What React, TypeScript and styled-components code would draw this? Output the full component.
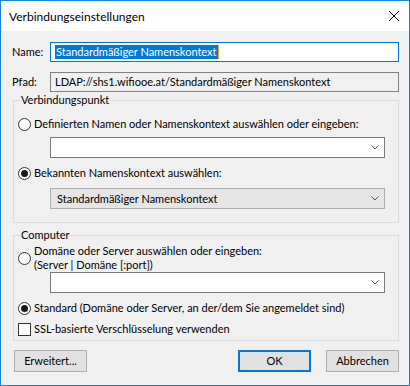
import React from "react"
import styled, { createGlobalStyle } from "styled-components"

const GlobalStyle = createGlobalStyle`
    html, body {
        margin: 0;
        padding: 0;
        background: #ffffff;
    }
`

const Window = styled.div`
    width: 410px;
    height: 386px;
    box-sizing: border-box;
    border: 1px solid #1883d7;
    display: flex;
    flex-direction: column;
    font-family: Lato, "Liberation Sans", sans-serif;
    font-size: 11px;
    color: #000;
`

const TitleBar = styled.div`
    height: 30px;
    background: #ffffff;
    display: flex;
    align-items: center;
    justify-content: space-between;
    padding: 0 10px 0 8px;
`

const Title = styled.span`
    font-size: 12px;
    line-height: 14px;
    margin-top: 1px;
`

const CloseIcon = styled.svg`
    width: 10px;
    height: 10px;
`

const Body = styled.div`
    flex: 1;
    background: #f0f0f0;
    padding: 11px 10px 0 11px;
    display: flex;
    flex-direction: column;
`

const FieldRow = styled.div<{ $gap?: number }>`
    display: flex;
    align-items: center;
    margin-top: ${({ $gap }) => $gap ?? 0}px;
`

const Label = styled.span`
    width: 38px;
    line-height: 14px;
`

const TextBox = styled.div<{ $border: string; $bg: string }>`
    flex: 1;
    height: 20px;
    box-sizing: border-box;
    border: 1px solid ${({ $border }) => $border};
    background: ${({ $bg }) => $bg};
    display: flex;
    align-items: center;
    padding-left: 4px;
    line-height: 14px;
`

const Selected = styled.span`
    background: #0078d7;
    color: #ffffff;
    padding: 0 1px;
    border-right: 1px solid #f0a030;
`

const Group = styled.fieldset<{ $top: number }>`
    margin: ${({ $top }) => $top}px 0 0 1px;
    padding: 0 0 0 4px;
    border: 1px solid #dcdcdc;
    min-width: 0;
`

const Legend = styled.legend`
    padding: 0 1px;
    margin-left: 2px;
    line-height: 14px;
`

const GroupInner = styled.div<{ $top: number; $bottom: number }>`
    display: flex;
    flex-direction: column;
    padding: ${({ $top }) => $top}px 0 ${({ $bottom }) => $bottom}px 0;
`

const OptionRow = styled.div<{ $gap?: number }>`
    display: flex;
    align-items: center;
    gap: 3px;
    margin-top: ${({ $gap }) => $gap ?? 0}px;
    line-height: 14px;
`

const RadioCircle = styled.span<{ $checked?: boolean }>`
    width: 13px;
    height: 13px;
    box-sizing: border-box;
    border-radius: 50%;
    border: 1px solid #333333;
    background: #ffffff;
    display: flex;
    align-items: center;
    justify-content: center;
    flex-shrink: 0;

    &::after {
        content: "";
        display: ${({ $checked }) => ($checked ? "block" : "none")};
        width: 7px;
        height: 7px;
        border-radius: 50%;
        background: #1a1a1a;
    }
`

const CheckSquare = styled.span`
    width: 13px;
    height: 13px;
    box-sizing: border-box;
    border: 1px solid #333333;
    background: #ffffff;
    flex-shrink: 0;
`

const TwoLines = styled.span`
    line-height: 14px;
`

const Combo = styled.div<{ $list?: boolean; $gap?: number }>`
    height: 21px;
    box-sizing: border-box;
    margin: ${({ $gap }) => $gap ?? 0}px 13px 0 32px;
    border: 1px solid ${({ $list }) => ($list ? "#adadad" : "#7a7a7a")};
    background: ${({ $list }) => ($list ? "#e5e5e5" : "#ffffff")};
    display: flex;
    align-items: center;
    padding: 0 5px 0 6px;
    line-height: 14px;
`

const ComboText = styled.span`
    flex: 1;
`

const Chevron = styled.svg`
    width: 8px;
    height: 5px;
`

const ButtonBar = styled.div`
    display: flex;
    margin-top: 9px;
    padding-left: 2px;
    gap: 15px;
`

const Button = styled.div<{ $default?: boolean }>`
    width: 73px;
    height: 22px;
    box-sizing: border-box;
    background: #e1e1e1;
    border: ${({ $default }) => ($default ? "2px solid #0078d7" : "1px solid #adadad")};
    display: flex;
    align-items: center;
    justify-content: center;
    line-height: 14px;

    &:first-child {
        margin-right: auto;
    }
`

const ChevronDown = () => (
    <Chevron viewBox="0 0 8 5">
        <path d="M0.5 0.5 L4 4 L7.5 0.5" fill="none" stroke="#555" strokeWidth="1" />
    </Chevron>
)

const Radio = ({ checked, children, gap }: { checked?: boolean; children: React.ReactNode; gap?: number }) => (
    <OptionRow $gap={gap}>
        <RadioCircle $checked={checked} />
        {children}
    </OptionRow>
)

export default function App() {
    return (
        <>
            <GlobalStyle />
            <Window>
                <TitleBar>
                    <Title>Verbindungseinstellungen</Title>
                    <CloseIcon viewBox="0 0 10 10">
                        <path d="M0 0 L10 10 M10 0 L0 10" stroke="#000" strokeWidth="1" />
                    </CloseIcon>
                </TitleBar>
                <Body>
                    <FieldRow>
                        <Label>Name:</Label>
                        <TextBox $border="#0078d7" $bg="#ffffff">
                            <Selected>Standardmäßiger Namenskontext</Selected>
                        </TextBox>
                    </FieldRow>
                    <FieldRow $gap={10}>
                        <Label>Pfad:</Label>
                        <TextBox $border="#828282" $bg="#f0f0f0">
                            LDAP://shs1.wifiooe.at/Standardmäßiger Namenskontext
                        </TextBox>
                    </FieldRow>

                    <Group $top={1}>
                        <Legend>Verbindungspunkt</Legend>
                        <GroupInner $top={10} $bottom={13}>
                            <Radio>Definierten Namen oder Namenskontext auswählen oder eingeben:</Radio>
                            <Combo $gap={6}>
                                <ComboText />
                                <ChevronDown />
                            </Combo>
                            <Radio checked gap={8}>Bekannten Namenskontext auswählen:</Radio>
                            <Combo $list $gap={8}>
                                <ComboText>Standardmäßiger Namenskontext</ComboText>
                                <ChevronDown />
                            </Combo>
                        </GroupInner>
                    </Group>

                    <Group $top={5}>
                        <Legend>Computer</Legend>
                        <GroupInner $top={2} $bottom={4}>
                            <Radio>
                                <TwoLines>
                                    Domäne oder Server auswählen oder eingeben:
                                    <br />
                                    (Server | Domäne [:port])
                                </TwoLines>
                            </Radio>
                            <Combo>
                                <ComboText />
                                <ChevronDown />
                            </Combo>
                            <Radio checked gap={8}>Standard (Domäne oder Server, an der/dem Sie angemeldet sind)</Radio>
                            <OptionRow $gap={7}>
                                <CheckSquare />
                                SSL-basierte Verschlüsselung verwenden
                            </OptionRow>
                        </GroupInner>
                    </Group>

                    <ButtonBar>
                        <Button>Erweitert...</Button>
                        <Button $default>OK</Button>
                        <Button>Abbrechen</Button>
                    </ButtonBar>
                </Body>
            </Window>
        </>
    )
}
